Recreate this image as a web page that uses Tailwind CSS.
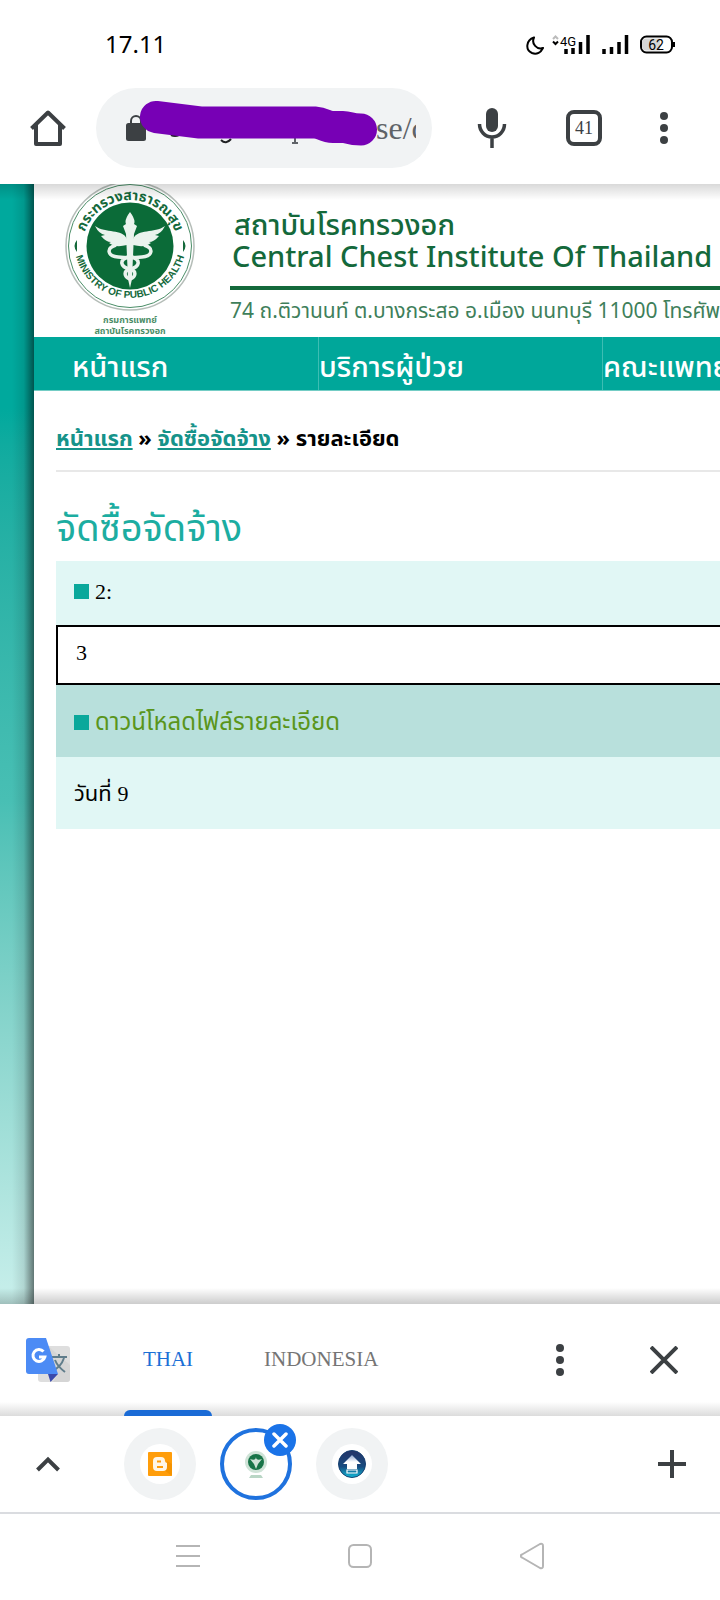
<!DOCTYPE html>
<html lang="th">
<head>
<meta charset="utf-8">
<meta name="viewport" content="width=device-width, initial-scale=1">
<title>Central Chest Institute Of Thailand</title>
<script src="https://cdn.jsdelivr.net/npm/@tailwindcss/browser@4"></script>
</head>
<body class="flex min-h-screen flex-col overflow-x-hidden bg-white font-['Noto_Sans','Noto_Sans_Thai',sans-serif] text-black">

<!-- Status bar -->
<div class="flex h-16 items-end justify-between pr-11 pb-[2px] pl-[105px]">
  <span class="font-['Noto_Sans',sans-serif] text-2xl/9">17.11</span>
  <svg class="mb-1 h-6 w-[150px]" viewBox="0 0 150 24" role="img" aria-label="Night mode, 4G, battery 62">
    <path d="M8 3.500 C0 6 -1 16 6 19 C11 21 15 18 17 14 C11 16 5 10 8 3.500 Z" fill="none" stroke="#000" stroke-width="2" stroke-linejoin="round"/>
    <path d="M27 5 l2.500 -2.500 2.500 2.500" fill="none" stroke="#bbb" stroke-width="2"/>
    <path d="M27 7.500 l2.500 2.500 2.500 -2.500" fill="none" stroke="#000" stroke-width="2"/>
    <text x="34" y="12" font-family="Roboto, sans-serif" font-size="13">4G</text>
    <path d="M40 15v5M47 14v6M54.500 8v12M62 1v19M78 15v5M85.500 13v7M93 8v12M100.500 1v19" stroke="#000" stroke-width="3.500"/>
    <rect x="115" y="2.500" width="31" height="16" rx="5.500" fill="#fff" stroke="#000" stroke-width="2"/>
    <path d="M134 4.500h-14a4 4 0 0 0-4 4v4a4 4 0 0 0 4 4h14z" fill="#d6d6d6"/>
    <path d="M148 8v5" stroke="#000" stroke-width="2"/>
    <text x="130" y="15.500" text-anchor="middle" font-family="Roboto, sans-serif" font-size="14">62</text>
  </svg>
</div>

<!-- Browser toolbar -->
<header class="flex h-[120px] items-center bg-white pt-2 text-[#3c4043]">
  <button class="flex w-24 shrink-0 justify-center" aria-label="Home">
    <svg class="size-10" viewBox="0 0 40 40" fill="none" stroke="currentColor" stroke-width="4" stroke-linejoin="round"><path d="M3.500 20.500 L20 4.500 L36.500 20.500"/><path d="M8 17v19h24V17"/></svg>
  </button>
  <div class="relative flex h-20 min-w-0 flex-1 items-center rounded-full bg-[#f1f3f4] pr-4 pl-[30px]">
    <svg class="h-[26px] w-5 shrink-0" viewBox="0 0 20 26"><rect y="8" width="20" height="18" rx="2.500" fill="currentColor"/><path d="M5 9V6a5 5 0 0 1 10 0v3" fill="none" stroke="currentColor" stroke-width="2"/></svg>
    <input class="min-w-0 flex-1 bg-transparent pl-[230px] font-['Liberation_Serif',serif] text-[32px] text-[#5f6368] outline-none" value="se/c" aria-label="Address">
    <!-- Marker stroke over the address -->
    <svg class="absolute top-0 left-0 h-20 w-[284px]" viewBox="0 0 284 80" fill="none">
      <path d="M75 47q4 2 8 0M125 52q5 5 10-1" stroke="#202124" stroke-width="2"/>
      <path d="M199 48v7M196 55h6" stroke="#5f6368" stroke-width="2"/>
      <path d="M60 29 L104 34.500 H219 C228 35 228 39 237 39 H247 C253 39 253 41.500 265 41.500" stroke="#7700b5" stroke-width="32" stroke-linecap="round" stroke-linejoin="round"/>
    </svg>
  </div>
  <button class="flex w-[120px] shrink-0 justify-center" aria-label="Voice search">
    <svg class="size-10" viewBox="0 0 40 40" fill="none" stroke="currentColor"><rect x="14" width="12" height="24" rx="6" fill="currentColor" stroke="none"/><path d="M7.500 16a12.500 13 0 0 0 25 0M20 29v11" stroke-width="3.500"/></svg>
  </button>
  <button class="mr-9 ml-[14px] flex size-9 shrink-0 items-center justify-center rounded-lg border-4 border-[#3c4043] font-['Liberation_Serif',serif] text-lg/7" aria-label="Tabs">41</button>
  <button class="mr-[30px] flex w-[52px] shrink-0 justify-center" aria-label="Menu">
    <svg class="h-8 w-2" viewBox="0 0 8 32" fill="currentColor"><circle cx="4" cy="4" r="4"/><circle cx="4" cy="16" r="4"/><circle cx="4" cy="28" r="4"/></svg>
  </button>
</header>

<!-- Web page -->
<main class="relative flex min-h-0 flex-1 overflow-hidden">
  <div class="flex w-[34px] shrink-0 bg-linear-to-b from-[#00a99d] from-20% via-[#48bfb4] via-55% to-[#c8efeb]">
    <div class="flex-1 bg-linear-to-r from-transparent from-35% via-black/10 via-70% to-black/50"></div>
  </div>
  <div class="min-w-0 flex-1 overflow-hidden">
    <div class="flex h-[153px] text-[#14693b]">
      <svg class="ml-[26px] h-[153px] w-[140px] shrink-0" viewBox="0 0 140 153" role="img" aria-label="Ministry of Public Health">
        <defs><path id="top" d="M22 64a48 48 0 0 1 96 0"/><path id="bottom" d="M14 58a56 56 0 0 0 112 0"/></defs>
        <circle cx="70" cy="62" r="64" fill="#fff" stroke="#b5bdb8" stroke-width="1.500"/>
        <circle cx="70" cy="62" r="61.500" fill="none" stroke="#4b8e68"/>
        <circle cx="70" cy="62" r="43.500" fill="#0b6b38"/>
        <text font-size="14" font-weight="700" fill="#14693b"><textPath href="#top" startOffset="50%" text-anchor="middle">กระทรวงสาธารณสุข</textPath></text>
        <text font-size="10" font-weight="700" fill="#14693b" font-family="Liberation Sans, sans-serif"><textPath href="#bottom" startOffset="50%" text-anchor="middle">MINISTRY OF PUBLIC HEALTH</textPath></text>
        <path d="M17 56q-5 6 0 12zM123 56q5 6 0 12z" fill="#14693b"/>
        <g fill="#eaf3ed">
          <path d="M70 28q6 8 4 12l3 2-3 8-2 45-2 9-2-9-2-45-3-8 3-2q-2-4 4-12z"/>
          <path d="M67 55C62 44 46 50 35 42q4 8 10 9l-4 1q5 6 10 6l-2 1q6 5 18 2zM73 55C78 44 94 50 105 42q-4 8-10 9l4 1q-5 6-10 6l2 1q-6 5-18 2z"/>
        </g>
        <g fill="none" stroke="#eaf3ed" stroke-width="3.500"><path d="M56 61c-10 3-9 11 2 12 8 1 16 1 24 0 11-1 12-9 2-12M68 73c-9 3-8 10 2 12 7 2 6 8 0 10M72 73c9 3 8 10-2 12-7 2-6 8 0 10"/></g>
        <text x="70" y="139" text-anchor="middle" font-size="9" font-weight="700" fill="#4b8e68">กรมการแพทย์</text>
        <text x="70" y="150" text-anchor="middle" font-size="9" font-weight="700" fill="#4b8e68">สถาบันโรคทรวงอก</text>
      </svg>
      <div class="ml-[30px] flex min-w-0 flex-1 flex-col pt-6 whitespace-nowrap">
        <p class="pl-1 text-[29px]/8 font-medium">สถาบันโรคทรวงอก</p>
        <p class="pl-[2px] text-[29px]/8 font-medium">Central Chest Institute Of Thailand</p>
        <div class="mt-[14px] h-1 bg-[#14693b]"></div>
        <p class="mt-1 text-[21px]/8 text-[#3f7f5b]">74 ถ.ติวานนท์ ต.บางกระสอ อ.เมือง นนทบุรี 11000 โทรศัพท์</p>
      </div>
    </div>
    <nav class="flex h-[54px] items-stretch border-b border-[#74cdc5] bg-[#00a79a] text-[29px]/[58px] font-medium whitespace-nowrap text-white">
      <a href="#" class="w-[284px] shrink-0 pl-[38px]">หน้าแรก</a>
      <a href="#" class="w-[284px] shrink-0 border-l border-[#3dbdb3]">บริการผู้ป่วย</a>
      <a href="#" class="w-[284px] shrink-0 border-l border-[#3dbdb3]">คณะแพทย์</a>
    </nav>
    <div class="pl-[22px]">
      <p class="h-[81px] border-b-2 border-[#e8e8e8] pt-[30px] text-[22px]/8 font-bold">
        <a href="#" class="text-[#16938a] underline decoration-2 underline-offset-2">หน้าแรก</a> » <a href="#" class="text-[#16938a] underline decoration-2 underline-offset-2">จัดซื้อจัดจ้าง</a> » รายละเอียด
      </p>
      <h1 class="h-[89px] pt-[30px] text-[38px]/[48px] text-[#1cada1]">จัดซื้อจัดจ้าง</h1>
      <table class="w-full border-separate border-spacing-0 text-[22px]/8">
        <tbody>
          <tr><td class="h-16 bg-[#e1f7f5] pb-1 pl-[18px]"><span class="mr-[6px] inline-block size-[15px] bg-[#0aa89b]"></span><span class="font-['Liberation_Serif',serif]">2:</span></td></tr>
          <tr><td class="h-[60px] border-2 border-r-0 border-black pb-1 pl-[18px] font-['Liberation_Serif',serif]">3</td></tr>
          <tr><td class="h-[72px] bg-[#b8e0dc] pl-[18px] text-2xl/8"><span class="mr-[6px] inline-block size-[15px] bg-[#0aa89b]"></span><a href="#" class="text-[#5a951b]">ดาวน์โหลดไฟล์รายละเอียด</a></td></tr>
          <tr><td class="h-[72px] bg-[#e1f7f5] pl-[18px]">วันที่ <span class="font-['Liberation_Serif',serif]">9</span></td></tr>
        </tbody>
      </table>
    </div>
  </div>
  <!-- Shadows that the browser bars cast on the page -->
  <div class="pointer-events-none absolute inset-x-0 top-0 h-4 bg-linear-to-b from-black/15 to-transparent"></div>
  <div class="pointer-events-none absolute inset-x-0 bottom-0 h-4 bg-linear-to-t from-black/20 to-transparent"></div>
</main>

<!-- Translate bar -->
<section class="flex h-[112px] items-stretch bg-linear-to-t from-[#dcdcdc] to-white to-[14px] font-['Liberation_Serif',serif] text-[21px]">
  <svg class="mr-[54px] ml-[26px] size-11 shrink-0 self-center" viewBox="0 0 44 44">
    <rect x="12" y="8" width="32" height="36" rx="3" fill="#dedede"/>
    <path d="M22 8 L32 36 L27 44 H41 Q44 44 44 41 V27z" fill="#cfcfcf" opacity=".6"/>
    <path d="M26 19h15M33 16v4M38 20c-2 6-7 11-12 13M29 22c2 5 6 9 10 12" fill="none" stroke="#607d8b" stroke-width="2"/>
    <path d="M22 36h10l-7.500 8z" fill="#3949ab"/>
    <path d="M3 0h17l12 36H3q-3 0-3-3V3q0-3 3-3z" fill="#4c8bf5"/>
    <path d="M17.500 13.500a6 6 0 1 0 1.300 5.500H13" fill="none" stroke="#fff" stroke-width="3"/>
  </svg>
  <button class="relative flex w-[88px] items-center justify-center text-[#1b6fd6]">THAI<span class="absolute inset-x-0 bottom-0 h-[6px] rounded-t-md bg-[#1a6bd6]"></span></button>
  <button class="ml-[52px] text-[#757575]">INDONESIA</button>
  <button class="mr-[81px] ml-auto text-[#3c4043]" aria-label="Options"><svg class="h-8 w-[17px]" viewBox="-4 0 17 32" fill="currentColor"><circle cx="4" cy="4" r="4"/><circle cx="4" cy="16" r="4"/><circle cx="4" cy="28" r="4"/></svg></button>
  <button class="mr-[42px] text-[#3c4043]" aria-label="Close"><svg class="size-7" viewBox="0 0 28 28" stroke="currentColor" stroke-width="4"><path d="M1 1l26 26M27 1L1 27"/></svg></button>
</section>

<!-- Tab strip -->
<section class="flex h-[98px] items-center border-b-2 border-[#dadce0] bg-white text-[#3c4043]">
  <button class="ml-9 flex w-6" aria-label="Expand"><svg class="h-4 w-6" viewBox="0 0 24 16" fill="none" stroke="currentColor" stroke-width="4"><path d="M1.500 14 L12 3.500 L22.500 14"/></svg></button>
  <div class="ml-16 flex gap-6">
    <button class="flex size-[72px] items-center justify-center rounded-full bg-[#f1f3f4]" aria-label="Blogger"><span class="flex size-10 items-center justify-center rounded-full bg-white">
      <svg class="size-6" viewBox="0 0 24 24"><rect width="24" height="24" rx="1" fill="#ff9d0a"/><path d="M16 18l8 6V12l-5-3z" fill="#f59300"/><path fill-rule="evenodd" d="M9 5h4q4 0 4 4 0 1.500 2 2v4q0 4-4 4H9q-4 0-4-4V9q0-4 4-4zM9 8.500v2h4v-2zM9 14v2h6v-2z" fill="#fff6e6"/></svg></span></button>
    <div class="relative">
      <button class="flex size-[72px] items-center justify-center rounded-full border-4 border-[#1f72de]" aria-label="Central Chest Institute">
        <svg class="h-7 w-6" viewBox="0 0 24 28"><circle cx="12" cy="12" r="11" fill="#cfe3d7"/><circle cx="12" cy="12" r="8" fill="#187448"/><path d="M6 9q6 2 6-2 0 4 6 2l-4 5-2 5-2-5z" fill="#cfe3d7"/><path d="M7 25h10l2 3H5z" fill="#b9d6c5"/></svg>
      </button>
      <button class="absolute -top-1 -right-1 flex size-8 items-center justify-center rounded-full bg-[#1a73e8]" aria-label="Close tab"><svg class="size-4" viewBox="0 0 16 16" stroke="#fff" stroke-width="3.500" stroke-linecap="round"><path d="M2 2l12 12M14 2L2 14"/></svg></button>
    </div>
    <button class="flex size-[72px] items-center justify-center rounded-full bg-[#f1f3f4]" aria-label="Upload site"><span class="flex size-10 items-center justify-center rounded-full bg-white">
      <svg class="size-7" viewBox="0 0 28 28"><defs><linearGradient id="blue" x2="0" y2="1"><stop stop-color="#263468"/><stop offset=".6" stop-color="#174c80"/><stop offset="1" stop-color="#10bad8"/></linearGradient><linearGradient id="arrow" x2="0" y2="1"><stop stop-color="#8fa6cf"/><stop offset=".5" stop-color="#fff"/></linearGradient></defs><circle cx="14" cy="14" r="13.500" fill="url(#blue)" stroke="#174070"/><path d="M14 5l9 9h-4v5H9v-5H5z" fill="url(#arrow)"/><path d="M9 20h10v3H9z" fill="none" stroke="#fff" stroke-width="1.200"/></svg></span></button>
  </div>
  <button class="mr-[34px] ml-auto" aria-label="New tab"><svg class="size-7" viewBox="0 0 28 28" stroke="currentColor" stroke-width="4"><path d="M14 0v28M0 14h28"/></svg></button>
</section>

<!-- System navigation -->
<footer class="flex h-[86px] items-center justify-center gap-[148px] bg-white pb-[2px] text-[#b5b5b5]">
  <button aria-label="Recent apps"><svg class="h-6 w-6" viewBox="0 0 24 24" stroke="currentColor" stroke-width="2"><path d="M0 2h24M0 12h24M0 22h24"/></svg></button>
  <button aria-label="Home screen"><svg class="h-6 w-6" viewBox="0 0 24 24" fill="none" stroke="currentColor" stroke-width="2"><rect x="1" y="1" width="22" height="22" rx="4.500"/></svg></button>
  <button aria-label="Back"><svg class="h-7 w-6" viewBox="0 0 24 28" fill="none" stroke="currentColor" stroke-width="2" stroke-linejoin="round"><path d="M2 12.500 L20 2 Q23 1 23 4 V24 Q23 27 20 26 L2 15.500 Q-1 14 2 12.500z"/></svg></button>
</footer>
</body>
</html>
